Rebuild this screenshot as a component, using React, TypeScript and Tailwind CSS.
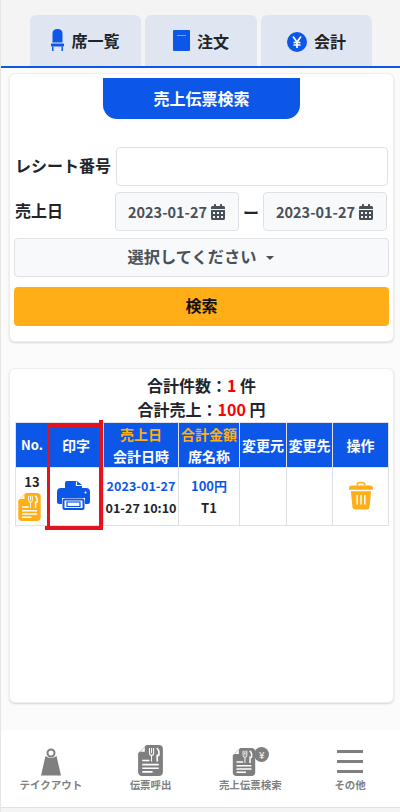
import { FaCalendarAlt } from 'react-icons/fa'

const font = "font-['Noto_Sans_CJK_JP','Noto_Sans',sans-serif]"

function ChairIcon() {
  return (
    <svg width="13" height="22" viewBox="0 0 13 22" fill="#0d57e8">
      <path d="M1.5 4.5 Q1.5 0 6.5 0 Q11.5 0 11.5 4.5 L11.5 13.5 H1.5 Z" />
      <rect x="0" y="14.5" width="13" height="3" rx="0.5" />
      <rect x="1" y="17.5" width="1.5" height="4.5" />
      <rect x="10.5" y="17.5" width="1.5" height="4.5" />
    </svg>
  )
}

function BookIcon() {
  return (
    <svg width="17" height="21" viewBox="0 0 17 21">
      <rect width="17" height="21" rx="1" fill="#0d57e8" />
      <rect x="4" y="5" width="9" height="1" fill="#7ea6f3" />
    </svg>
  )
}

function YenIcon() {
  return (
    <svg className="mt-[3px]" width="20" height="20" viewBox="0 0 20 20">
      <circle cx="10" cy="10" r="10" fill="#0d57e8" />
      <path d="M6 4.5 L10 10 L14 4.5 M10 10 V16 M6.5 10.5 H13.5 M6.5 13 H13.5" stroke="#fff" strokeWidth="1.7" fill="none" />
    </svg>
  )
}

function SlipIcon({ fill, width, height }: { fill: string; width: number; height: number }) {
  return (
    <svg width={width} height={height} viewBox="0 0 24 30">
      <path d="M8 0 H20 Q24 0 24 4 V26 Q24 30 20 30 H4 Q0 30 0 26 V8 Z" fill={fill} />
      <path d="M6.5 2 V6.5 H2 Z" fill="#fff" />
      <path d="M11 3 V8 Q11 10 13 10 V16 M15 3 V8 Q15 10 13 10 M13 3 V8" stroke="#fff" strokeWidth="1" fill="none" />
      <path d="M18 3 Q21 5 20 10 H18.5 V16" stroke="#fff" strokeWidth="1.6" fill="none" />
      <path d="M4 15 H11 M4 19 H20 M4 22.5 H20 M4 26 H14" stroke="#fff" strokeWidth="1.5" fill="none" />
    </svg>
  )
}

function PrinterIcon() {
  return (
    <svg width="33" height="29" viewBox="0 0 33 29">
      <path d="M8 2 Q8 0 10 0 H20 L25 4 V9 H8 Z" fill="#0d57e8" />
      <path d="M19.5 0.5 V4.5 H25" stroke="#fff" strokeWidth="1.2" fill="none" />
      <path d="M4 7 H29 Q33 7 33 11 V21 Q33 23 31 23 H28 V17 H5 V23 H2 Q0 23 0 21 V11 Q0 7 4 7 Z" fill="#0d57e8" />
      <rect x="6.5" y="18.5" width="20" height="9.5" rx="1" fill="#fff" stroke="#0d57e8" strokeWidth="2" />
      <rect x="10" y="21" width="13" height="4.5" fill="none" stroke="#0d57e8" strokeWidth="1.2" />
      <circle cx="28.5" cy="11.5" r="1" fill="#fff" />
    </svg>
  )
}

function TrashIcon() {
  return (
    <svg width="24" height="29" viewBox="0 0 25 29" fill="#ffae17">
      <path d="M8.5 4 Q8.5 1 11 1 H14 Q16.5 1 16.5 4" stroke="#ffae17" strokeWidth="1.5" fill="none" />
      <path d="M3 4 H22 Q25 4 25 7 V8.5 H0 V7 Q0 4 3 4 Z" />
      <path d="M2 10 H23 L21.5 26 Q21.3 29 18.5 29 H6.5 Q3.7 29 3.5 26 Z" />
      <path d="M8.5 14 V24 M12.5 14 V24 M16.5 14 V24" stroke="#fff" strokeWidth="1.5" />
    </svg>
  )
}

function BagIcon() {
  return (
    <svg width="20" height="28" viewBox="0 0 20 28" fill="#7f7f7f">
      <circle cx="10" cy="5" r="3.5" stroke="#7f7f7f" strokeWidth="2" fill="none" />
      <path d="M4.5 8 Q10 12 15.5 8 L20 27.5 H0 Z" />
    </svg>
  )
}

function NavItem({ icon, label }: { icon: React.ReactNode; label: string }) {
  return (
    <div className="flex w-1/4 flex-col items-center">
      <div className="flex h-[31px] items-end">{icon}</div>
      <span className="mt-[2px] text-[10.5px] leading-[14px] font-bold text-[#808080]">{label}</span>
    </div>
  )
}

function DateBox() {
  return (
    <div className="flex h-[39px] w-[124px] items-center justify-center gap-[3px] rounded border border-[#dee2e6] bg-[#f8f9fa] text-[14.5px] font-bold text-[#495057]">
      2023-01-27
      <FaCalendarAlt className="text-[16px]" />
    </div>
  )
}

export default function App() {
  return (
    <div className={`${font} flex h-[812px] w-[400px] flex-col overflow-hidden border-l border-[#e6e6e6] bg-[#fbfbfb] text-[#212529]`}>
      <div className="flex h-[68px] shrink-0 items-end gap-[4px] border-b-2 border-[#0d57e8] bg-[#f4f4f4] pl-[29px]">
        <div className="flex h-[51px] w-[111px] items-center justify-center gap-[7px] rounded-t-md bg-[#e0e6f1] pb-[1px] text-[16px] font-bold">
          <ChairIcon />
          席一覧
        </div>
        <div className="flex h-[51px] w-[112px] items-center justify-center gap-[7px] rounded-t-md bg-[#e0e6f1] text-[16px] font-bold">
          <BookIcon />
          注文
        </div>
        <div className="flex h-[51px] w-[111px] items-center justify-center gap-[7px] rounded-t-md bg-[#e0e6f1] text-[16px] font-bold">
          <YenIcon />
          会計
        </div>
      </div>

      <div className="mt-[5px] ml-[8px] h-[269px] w-[385px] shrink-0 rounded-md border border-[#eeeeee] bg-white px-[4px] shadow-[0_1px_2px_rgba(0,0,0,0.15)]">
        <div className="mx-auto mt-[4px] flex h-[41px] w-[197px] items-center justify-center rounded-b-[14px] bg-[#0d57e8] pb-[2px] text-[16px] font-bold text-white">
          売上伝票検索
        </div>
        <div className="mt-[28px] flex items-center">
          <span className="w-[102px] pb-[3px] pl-[1px] text-[16px] font-bold whitespace-nowrap">レシート番号</span>
          <div className="h-[39px] w-[272px] rounded border border-[#dee2e6] bg-white" />
        </div>
        <div className="mt-[6px] flex items-center">
          <span className="w-[101px] pb-[3px] pl-[1px] text-[16px] font-bold">売上日</span>
          <DateBox />
          <span className="w-[24px] text-center text-[16px] font-bold">ー</span>
          <DateBox />
        </div>
        <div className="mt-[7px] flex h-[39px] w-[375px] items-center justify-center gap-[9px] rounded border border-[#dee2e6] bg-[#f8f9fa] pr-[2px] pb-[2px] text-[16.25px] font-bold text-[#495057]">
          選択してください
          <span className="mt-[2px] border-x-[4px] border-t-[4px] border-x-transparent border-t-[#495057]" />
        </div>
        <div className="mt-[10px] flex h-[39px] w-[375px] items-center justify-center rounded bg-[#ffae17] pb-[3px] text-[16px] font-bold text-[#111111]">
          検索
        </div>
      </div>

      <div className="relative mt-[26px] ml-[8px] h-[335px] w-[385px] shrink-0 rounded-md border border-[#eeeeee] bg-white px-[5px] shadow-[0_1px_2px_rgba(0,0,0,0.15)]">
        <div className="mt-[4px] text-center text-[16px] leading-[24px] font-bold">
          合計件数：<span className="text-[#ff0000]">1</span> 件
        </div>
        <div className="mb-[1px] text-center text-[16px] leading-[24px] font-bold">
          合計売上：<span className="text-[#ff0000]">100</span> 円
        </div>
        <table className="w-[373px] table-fixed border-collapse text-center text-[13px] font-bold">
          <colgroup>
            <col className="w-[33px]" />
            <col className="w-[55px]" />
            <col className="w-[75px]" />
            <col className="w-[61px]" />
            <col className="w-[47px]" />
            <col className="w-[46px]" />
            <col className="w-[56px]" />
          </colgroup>
          <thead>
            <tr className="h-[44px] bg-[#0d57e8] text-[14px] leading-[22px] text-white">
              <th className="border border-[#dee2e6] text-[13px]">No.</th>
              <th className="border border-[#dee2e6]">印字</th>
              <th className="border border-[#dee2e6]">
                <div className="text-[#ffae17]">売上日</div>
                <div>会計日時</div>
              </th>
              <th className="border border-[#dee2e6] whitespace-nowrap">
                <div className="text-[#ffae17]">合計金額</div>
                <div>席名称</div>
              </th>
              <th className="border border-[#dee2e6] whitespace-nowrap">変更元</th>
              <th className="border border-[#dee2e6] whitespace-nowrap">変更先</th>
              <th className="border border-[#dee2e6]">操作</th>
            </tr>
          </thead>
          <tbody>
            <tr className="h-[58px]">
              <td className="border border-[#dee2e6] align-top">
                <div className="flex flex-col items-center pt-[2px] leading-[23px]">
                  13
                  <div className="-ml-[5px] flex">
                    <SlipIcon fill="#ffae17" width={23} height={28} />
                  </div>
                </div>
              </td>
              <td className="border border-[#dee2e6]">
                <div className="-ml-[5px] flex justify-center pb-[3px]">
                  <PrinterIcon />
                </div>
              </td>
              <td className="border border-[#dee2e6] text-[12.6px] leading-[22px] whitespace-nowrap">
                <div className="text-[#0d57e8]">2023-01-27</div>
                <div>01-27 10:10</div>
              </td>
              <td className="border border-[#dee2e6] leading-[22px]">
                <div className="text-[#0d57e8]">100円</div>
                <div>T1</div>
              </td>
              <td className="border border-[#dee2e6]" />
              <td className="border border-[#dee2e6]" />
              <td className="border border-[#dee2e6]">
                <div className="flex justify-center pb-[3px]">
                  <TrashIcon />
                </div>
              </td>
            </tr>
          </tbody>
        </table>
        {/* red annotation, hand drawn in the reference so the strokes overshoot */}
        <div className="absolute top-[54px] left-[37px] h-[107px] w-[3px] bg-[#e3141d]" />
        <div className="absolute top-[54px] left-[37px] h-[4px] w-[55px] bg-[#e3141d]" />
        <div className="absolute top-[51px] left-[89px] h-[110px] w-[4px] bg-[#e3141d]" />
        <div className="absolute top-[157px] left-[35px] h-[4px] w-[58px] bg-[#e3141d]" />
      </div>

      <div className="mt-[27px] flex h-[78px] w-full shrink-0 items-start border-b border-[#e2e2e2] bg-white pt-[15px]">
        <NavItem icon={<BagIcon />} label="テイクアウト" />
        <NavItem icon={<SlipIcon fill="#7f7f7f" width={25} height={31} />} label="伝票呼出" />
        <NavItem
          icon={
            <div className="relative -left-[6px] flex">
              <SlipIcon fill="#7f7f7f" width={24} height={28} />
              <div className="absolute -top-[1px] -right-[13px] flex h-[15px] w-[15px] items-center justify-center rounded-full bg-[#7f7f7f] text-[10px] leading-none text-white">
                ¥
              </div>
            </div>
          }
          label="売上伝票検索"
        />
        <NavItem
          icon={
            <div className="flex flex-col gap-[7px] pb-[3px]">
              <div className="h-[3px] w-[26px] bg-[#7f7f7f]" />
              <div className="h-[3px] w-[26px] bg-[#7f7f7f]" />
              <div className="h-[3px] w-[26px] bg-[#7f7f7f]" />
            </div>
          }
          label="その他"
        />
      </div>
      <div className="flex-1 bg-[#f4f4f4]" />
    </div>
  )
}
